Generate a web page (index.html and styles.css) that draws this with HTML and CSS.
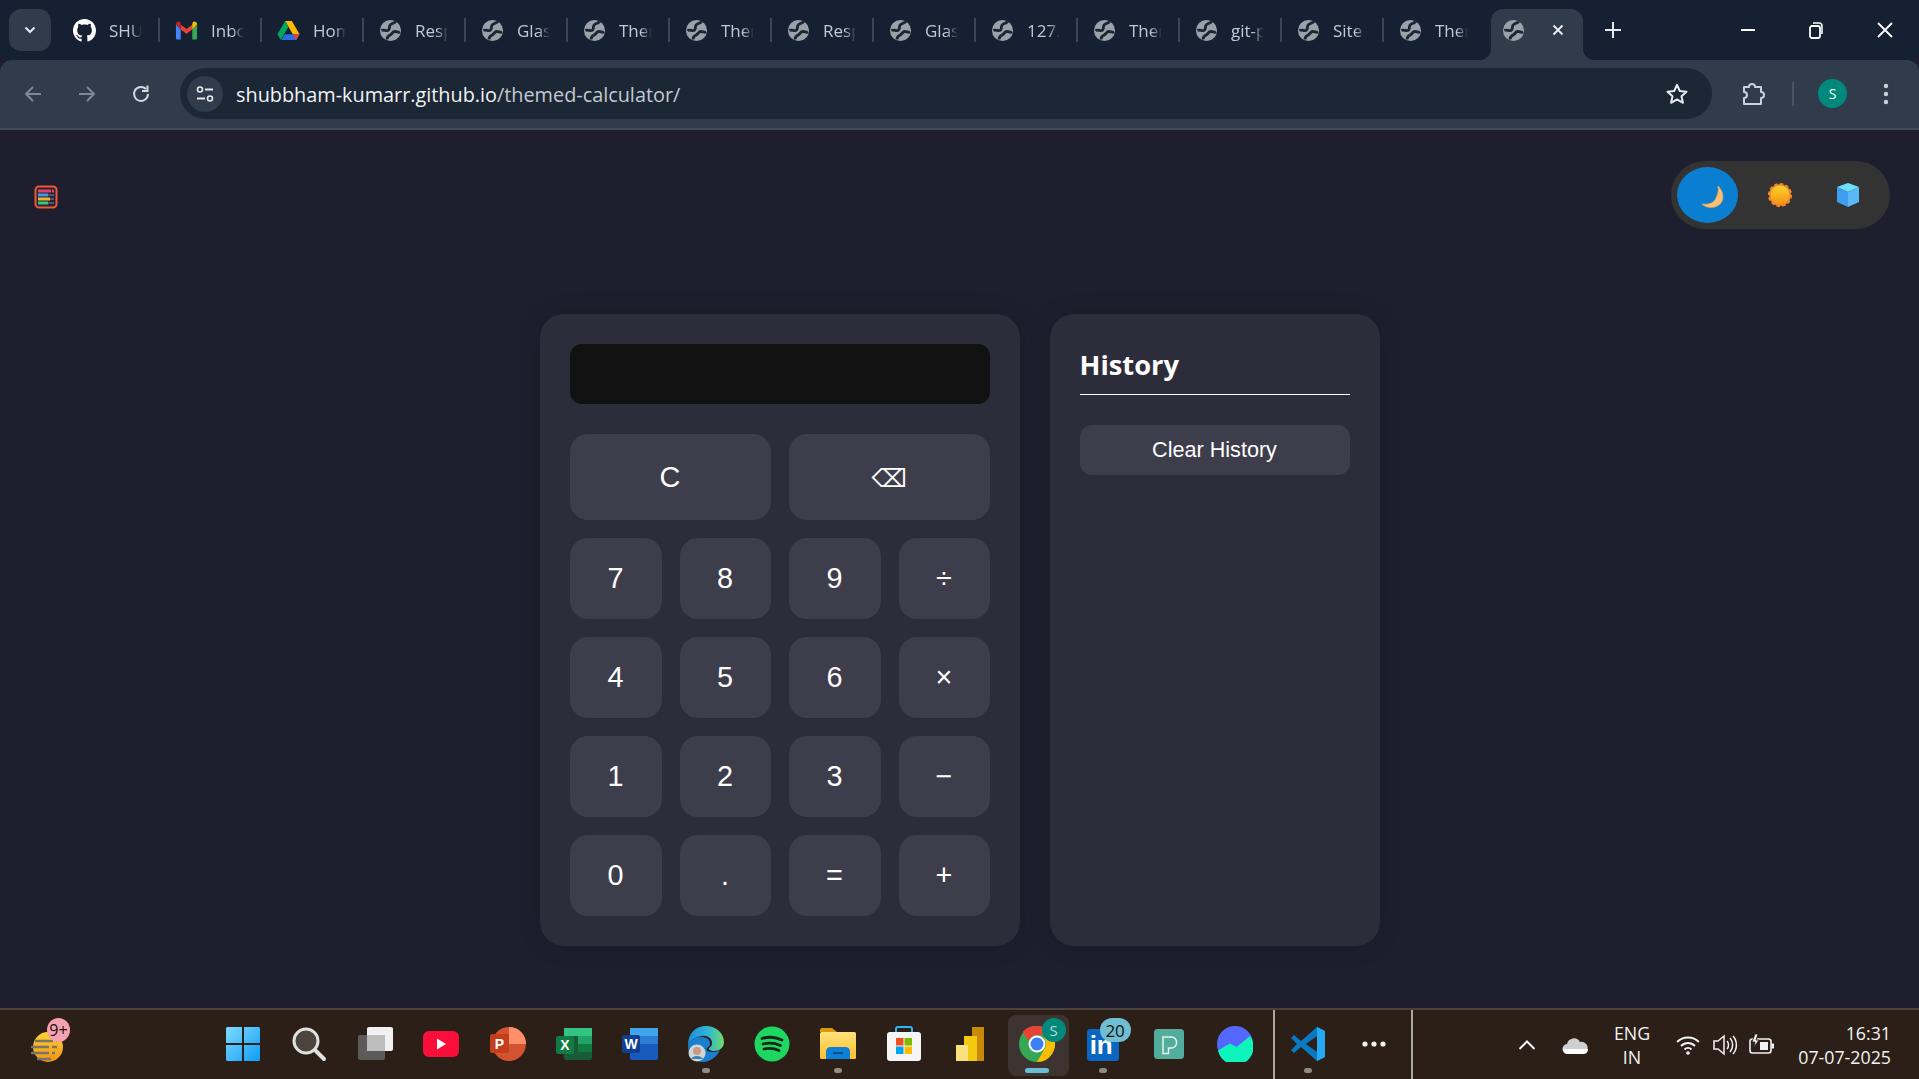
FILE: index.html
```html
<!DOCTYPE html>
<html lang="en">
<head>
    <meta charset="UTF-8">
    <meta name="viewport" content="width=device-width, initial-scale=1.0">
    <title>Themed Calculator</title>
    <link rel="stylesheet" href="styles.css">
</head>
<body>
    <svg class="defs" width="0" height="0">
        <defs>
            <symbol id="globe" viewBox="0 0 24 24">
                <circle cx="12" cy="12" r="11" fill="#9ba1a8"/>
                <path d="M2.500 12c3-1.500 5.500 1.500 7.500-.5s-.5-4.500 2.500-6 4-1.500 5-3" fill="none" stroke="#1b2635" stroke-width="3"/>
                <path d="M8.500 21.500c-.5-3 1.500-4 3.500-5s2-3.500 4.500-3.500 3.500 1.500 5.500.5" fill="none" stroke="#1b2635" stroke-width="3"/>
            </symbol>
            <linearGradient id="winGrad" x1="0" y1="0" x2="1" y2="1">
                <stop offset="0" stop-color="#7fdcff"/>
                <stop offset="1" stop-color="#0f9bf5"/>
            </linearGradient>
            <linearGradient id="sunGrad" x1="0" y1="0" x2="0" y2="1">
                <stop offset="0" stop-color="#ffd42e"/>
                <stop offset="1" stop-color="#f39214"/>
            </linearGradient>
            <linearGradient id="edgeGrad" x1="0" y1="0" x2="1" y2="0">
                <stop offset="0" stop-color="#1b8fd8"/>
                <stop offset="0.55" stop-color="#2fb4d8"/>
                <stop offset="1" stop-color="#6fdc6a"/>
            </linearGradient>
            <linearGradient id="folderGrad" x1="0" y1="0" x2="0" y2="1">
                <stop offset="0" stop-color="#ffe27a"/>
                <stop offset="1" stop-color="#fbbf2c"/>
            </linearGradient>
        </defs>
    </svg>

    <!-- browser chrome -->
    <div class="tabstrip">
        <div class="tab-search">
            <svg width="14" height="14" viewBox="0 0 14 14"><path d="M2.500 4.500 7 9l4.500-4.500" fill="none" stroke="#e6e9ee" stroke-width="2"/></svg>
        </div>
        <div class="tab">
            <svg class="favicon" viewBox="0 0 16 16"><path fill="#fff" d="M8 0C3.580 0 0 3.580 0 8c0 3.540 2.290 6.530 5.470 7.590.4.070.55-.17.55-.38 0-.19-.01-.82-.01-1.490-2.010.37-2.530-.49-2.690-.94-.09-.23-.48-.94-.82-1.130-.28-.15-.68-.52-.01-.53.63-.01 1.080.58 1.230.82.72 1.210 1.870.87 2.330.66.070-.52.28-.87.51-1.070-1.780-.2-3.640-.89-3.640-3.950 0-.87.31-1.590.82-2.150-.08-.2-.36-1.020.08-2.120 0 0 .67-.21 2.200.82.64-.18 1.320-.27 2-.27.68 0 1.360.09 2 .27 1.530-1.040 2.200-.82 2.200-.82.44 1.100.16 1.920.08 2.120.51.56.82 1.270.82 2.150 0 3.070-1.870 3.750-3.650 3.950.29.25.54.73.54 1.480 0 1.070-.01 1.930-.01 2.200 0 .21.15.46.55.38A8.013 8.013 0 0016 8c0-4.420-3.580-8-8-8z"/></svg>
            <span class="tab-title">SHU</span>
        </div>
        <div class="tab">
            <svg class="favicon" viewBox="0 0 24 24"><path d="M1 5.500V20c0 .8.6 1.500 1.500 1.500H6V11z" fill="#4285f4"/><path d="M23 5.500V20c0 .8-.6 1.500-1.500 1.500H18V11z" fill="#34a853"/><path d="M6 11v-5l6 4.500L18 6v5l-6 4.500z" fill="#ea4335"/><path d="M1 5.500C1 3 3.800 2 5.500 3.300L6 6v5z" fill="#c5221f"/><path d="M23 5.500C23 3 20.200 2 18.500 3.300L18 6v5z" fill="#fbbc04"/></svg>
            <span class="tab-title">Inbo</span>
        </div>
        <div class="tab">
            <svg class="favicon" viewBox="0 0 24 24"><path d="M8.500 2h7l8 14h-7z" fill="#ffba00"/><path d="M8.500 2 .5 16l3.500 6 8-14z" fill="#00a85d"/><path d="M8.200 16h15.300L20 22H4.500z" fill="#2a6fdb"/><path d="M16.500 16h7L20 22z" fill="#ea4335"/></svg>
            <span class="tab-title">Hom</span>
        </div>
        <div class="tab"><svg class="favicon"><use href="#globe"/></svg><span class="tab-title">Resp</span></div>
        <div class="tab"><svg class="favicon"><use href="#globe"/></svg><span class="tab-title">Glas</span></div>
        <div class="tab"><svg class="favicon"><use href="#globe"/></svg><span class="tab-title">Ther</span></div>
        <div class="tab"><svg class="favicon"><use href="#globe"/></svg><span class="tab-title">Ther</span></div>
        <div class="tab"><svg class="favicon"><use href="#globe"/></svg><span class="tab-title">Resp</span></div>
        <div class="tab"><svg class="favicon"><use href="#globe"/></svg><span class="tab-title">Glas</span></div>
        <div class="tab"><svg class="favicon"><use href="#globe"/></svg><span class="tab-title">127.</span></div>
        <div class="tab"><svg class="favicon"><use href="#globe"/></svg><span class="tab-title">Ther</span></div>
        <div class="tab"><svg class="favicon"><use href="#globe"/></svg><span class="tab-title">git-p</span></div>
        <div class="tab"><svg class="favicon"><use href="#globe"/></svg><span class="tab-title">Site</span></div>
        <div class="tab no-sep"><svg class="favicon"><use href="#globe"/></svg><span class="tab-title">Ther</span></div>
        <div class="tab-active">
            <svg class="favicon"><use href="#globe"/></svg>
            <svg width="14" height="14" viewBox="0 0 14 14"><path d="M2.500 2.500l9 9m0-9-9 9" stroke="#eef1f5" stroke-width="1.800"/></svg>
        </div>
        <svg class="new-tab" width="18" height="18" viewBox="0 0 18 18"><path d="M9 1v16M1 9h16" stroke="#e6e9ee" stroke-width="2"/></svg>
        <div class="win-controls">
            <div class="win-btn"><svg width="16" height="16" viewBox="0 0 16 16"><path d="M1 8h14" stroke="#fff" stroke-width="2"/></svg></div>
            <div class="win-btn"><svg width="16" height="18" viewBox="0 0 16 18"><rect x="2" y="5" width="10" height="12" rx="2" fill="none" stroke="#fff" stroke-width="1.800"/><path d="M5 2h6a3 3 0 0 1 3 3v8" fill="none" stroke="#fff" stroke-width="1.500"/></svg></div>
            <div class="win-btn"><svg width="18" height="18" viewBox="0 0 18 18"><path d="M2 2l14 14M16 2 2 16" stroke="#fff" stroke-width="1.800"/></svg></div>
        </div>
    </div>

    <div class="toolbar">
        <div class="nav-btn"><svg width="20" height="20" viewBox="0 0 20 20"><path d="M18 10H3m7-7-7 7 7 7" fill="none" stroke="#7f8995" stroke-width="2"/></svg></div>
        <div class="nav-btn"><svg width="20" height="20" viewBox="0 0 20 20"><path d="M2 10h15m-7-7 7 7-7 7" fill="none" stroke="#7f8995" stroke-width="2"/></svg></div>
        <div class="nav-btn"><svg width="22" height="22" viewBox="0 0 22 22"><path d="M18 11a7 7 0 1 1-2-5" fill="none" stroke="#d5dae1" stroke-width="2"/><path d="M17.500 2.500V8H12" fill="none" stroke="#d5dae1" stroke-width="2"/></svg></div>
        <div class="omnibox">
            <div class="site-info">
                <svg width="20" height="20" viewBox="0 0 20 20"><circle cx="5" cy="5.500" r="2.500" fill="none" stroke="#e6e9ee" stroke-width="1.600"/><path d="M10 5.500h8M2 14.500h8" stroke="#e6e9ee" stroke-width="1.800"/><circle cx="15" cy="14.500" r="2.500" fill="none" stroke="#e6e9ee" stroke-width="1.600"/></svg>
            </div>
            <div class="url">shubbham-kumarr.github.io<span class="url-path">/themed-calculator/</span></div>
            <svg class="star" width="24" height="24" viewBox="0 0 24 24"><path d="m12 2.800 2.800 6.200 6.700.7-5 4.500 1.400 6.600-5.900-3.400-5.900 3.400 1.400-6.600-5-4.500 6.700-.7z" fill="none" stroke="#e6e9ee" stroke-width="2" stroke-linejoin="round"/></svg>
        </div>
        <svg class="puzzle" width="26" height="26" viewBox="0 0 26 26"><path d="M4 6h5a3 3 0 0 1 6 0h6v5a3 3 0 0 1 0 6v6H4v-6a3 3 0 0 0 0-6z" fill="none" stroke="#c9d0d9" stroke-width="2" stroke-linejoin="round"/></svg>
        <div class="toolbar-sep"></div>
        <div class="avatar">S</div>
        <svg class="menu-dots" width="6" height="22" viewBox="0 0 6 22"><circle cx="3" cy="3" r="2.200" fill="#c9d0d9"/><circle cx="3" cy="11" r="2.200" fill="#c9d0d9"/><circle cx="3" cy="19" r="2.200" fill="#c9d0d9"/></svg>
    </div>

    <!-- page -->
    <main class="page">
        <svg class="abacus" width="24" height="24" viewBox="0 0 24 24">
            <rect x="1.500" y="1.500" width="21" height="21" rx="3.500" fill="#25243a" stroke="#f0582f" stroke-width="2"/>
            <path d="M4 6h13" stroke="#e8416a" stroke-width="3"/><path d="M18 6h2" stroke="#e8416a" stroke-width="3"/>
            <path d="M4 10h10" stroke="#3f9be8" stroke-width="3"/><path d="M14 10h6" stroke="#66666f" stroke-width="1.500"/>
            <path d="M4 14h12" stroke="#f5b42a" stroke-width="3"/><path d="M16 14h4" stroke="#66666f" stroke-width="1.500"/>
            <path d="M4 18h10" stroke="#35c77a" stroke-width="3"/><path d="M14 18h6" stroke="#66666f" stroke-width="1.500"/>
        </svg>

        <div class="theme-toggle">
            <div class="theme-opt active">
                <svg class="moon" width="24" height="24" viewBox="0 0 24 24"><path d="M17 1c5 5 7 13 2 18-5 5-14 4-18 0 7 1 12-1 14-6 2-4 3-8 2-12z" fill="#f9c077" stroke="#f3a950" stroke-width=".8"/></svg>
            </div>
            <div class="theme-opt">
                <svg width="26" height="26" viewBox="0 0 26 26"><circle cx="13" cy="13" r="10.800" fill="#f4862a" stroke="#f4862a" stroke-width="2.500" stroke-dasharray="3.500 2.100"/><circle cx="13" cy="13" r="9.500" fill="url(#sunGrad)"/></svg>
            </div>
            <div class="theme-opt">
                <svg width="26" height="26" viewBox="0 0 26 26"><path d="M13 1l11 4-11 5L2 5z" fill="#6fe0fa"/><path d="M2 5l11 5v15L2 20z" fill="#3f9df0"/><path d="M24 5 13 10v15l11-5z" fill="#59b8f5"/></svg>
            </div>
        </div>

        <div class="calc-wrap">
            <section class="calculator">
                <div class="display"></div>
                <div class="keys">
                    <button class="key wide">C</button>
                    <button class="key wide back">⌫</button>
                    <button class="key">7</button>
                    <button class="key">8</button>
                    <button class="key">9</button>
                    <button class="key op">÷</button>
                    <button class="key">4</button>
                    <button class="key">5</button>
                    <button class="key">6</button>
                    <button class="key op">×</button>
                    <button class="key">1</button>
                    <button class="key">2</button>
                    <button class="key">3</button>
                    <button class="key op">−</button>
                    <button class="key">0</button>
                    <button class="key">.</button>
                    <button class="key">=</button>
                    <button class="key op">+</button>
                </div>
            </section>
            <section class="history">
                <h2>History</h2>
                <button class="clear-btn">Clear History</button>
            </section>
        </div>
    </main>

    <!-- windows taskbar -->
    <footer class="taskbar">
        <div class="weather">
            <svg width="36" height="34" viewBox="0 0 36 34"><ellipse cx="19" cy="18" rx="15" ry="15" fill="url(#sunGrad)"/><path d="M6 12h22M2 18h26M2 24h24M8 30h14" stroke="#77736d" stroke-width="2.500" stroke-dasharray="18 3"/></svg>
            <span class="weather-badge">9+</span>
        </div>
        <div class="apps">
            <div class="app">
                <svg width="36" height="36" viewBox="0 0 36 36"><path d="M1 2.500q0-1.500 1.500-1.500H17v16H1zM19 1h14.500q1.500 0 1.500 1.500V17H19zM1 19h16v16H2.500Q1 35 1 33.500zM19 19h16v14.500q0 1.500-1.500 1.500H19z" fill="url(#winGrad)"/></svg>
            </div>
            <div class="app">
                <svg width="36" height="36" viewBox="0 0 36 36"><circle cx="15" cy="15" r="12" fill="#4d443d" stroke="#dfe0e0" stroke-width="3"/><path d="M24 24l9 9" stroke="#dfe0e0" stroke-width="4" stroke-linecap="round"/></svg>
            </div>
            <div class="app">
                <svg width="36" height="36" viewBox="0 0 36 36"><rect x="1" y="9" width="27" height="25" rx="2" fill="#5d5b59"/><rect x="10" y="1" width="26" height="24" rx="2" fill="#f1f1f1"/><rect x="10" y="9" width="18" height="16" fill="#bdbdbd"/></svg>
            </div>
            <div class="app">
                <svg width="36" height="26" viewBox="0 0 36 26"><rect width="36" height="26" rx="6" fill="#fb0f3a"/><path d="M14 7.500v11l9-5.500z" fill="#fff"/></svg>
            </div>
            <div class="app">
                <svg width="36" height="34" viewBox="0 0 36 34"><circle cx="19" cy="17" r="17" fill="#d35230"/><path d="M19 0a17 17 0 0 1 17 17H19z" fill="#ff8f6b"/><rect x="0" y="7" width="19" height="19" rx="2" fill="#c43e1c"/><text x="9.500" y="22" class="icon-letter">P</text></svg>
            </div>
            <div class="app">
                <svg width="36" height="34" viewBox="0 0 36 34"><rect x="8" y="1" width="28" height="32" rx="2" fill="#185c37"/><rect x="8" y="1" width="28" height="8" fill="#33c481"/><rect x="22" y="9" width="14" height="8" fill="#21a366"/><rect x="22" y="17" width="14" height="8" fill="#107c41"/><rect x="0" y="9" width="18" height="18" rx="2" fill="#107c41"/><text x="9" y="23" class="icon-letter">X</text></svg>
            </div>
            <div class="app">
                <svg width="36" height="34" viewBox="0 0 36 34"><rect x="8" y="1" width="28" height="32" rx="2" fill="#185abd"/><rect x="8" y="1" width="28" height="8" fill="#41a5ee"/><rect x="8" y="9" width="28" height="8" fill="#2b7cd3"/><rect x="0" y="8" width="18" height="18" rx="2" fill="#103f91"/><text x="9" y="22" class="icon-letter">W</text></svg>
            </div>
            <div class="app running">
                <svg width="38" height="38" viewBox="0 0 38 38"><path d="M1 20C1 8 9 1 19 1c10 0 18 7 18 16 0 6-5 9-10 9-4 0-6-2-5-3 2-1 3-3 3-5 0-5-5-8-10-7C8 12 3 15 1 20z" fill="url(#edgeGrad)"/><path d="M1 20c2-5 7-8 12-8 5-.5 10 2 10 6 0 2-1 4-3 5-2 3 2 4 6 4 3 0 5-.5 7-2-3 6-9 12-17 12C7 37 1 30 1 20z" fill="#1b7fd0"/><circle cx="10" cy="28" r="8.500" fill="#cfd6da"/><circle cx="10" cy="26" r="4" fill="#c59a80"/><path d="M4 34c2-4 10-4 12 0z" fill="#3b7fb5"/></svg>
            </div>
            <div class="app">
                <svg width="36" height="36" viewBox="0 0 36 36"><circle cx="18" cy="18" r="17.500" fill="#1ed760"/><path d="M8 12.500c7-2 14-1.500 20 1.500M9 18c6-1.500 12-1 17.500 1.500M10 23c5-1 10-.8 15 1.500" fill="none" stroke="#14261a" stroke-width="2.800" stroke-linecap="round"/></svg>
            </div>
            <div class="app running">
                <svg width="36" height="34" viewBox="0 0 36 34"><path d="M0 3q0-2 2-2h10l5 4h-17z" fill="#d99a10"/><rect y="5" width="36" height="27" rx="1.500" fill="url(#folderGrad)"/><path d="M6 32v-7q0-5 5-5h14q5 0 5 5v7z" fill="#0f7fd8"/><path d="M13 26h10" stroke="#084f92" stroke-width="2"/></svg>
            </div>
            <div class="app">
                <svg width="36" height="36" viewBox="0 0 36 36"><path d="M10 7V3q0-2 2-2h12q2 0 2 2v4" fill="none" stroke="#29b6f6" stroke-width="2"/><rect x="1" y="6" width="34" height="29" rx="3" fill="#f5f5f5"/><rect x="10" y="12" width="7.500" height="7.500" fill="#f25022"/><rect x="18.500" y="12" width="7.500" height="7.500" fill="#7fba00"/><rect x="10" y="20.500" width="7.500" height="7.500" fill="#00a4ef"/><rect x="18.500" y="20.500" width="7.500" height="7.500" fill="#ffb900"/></svg>
            </div>
            <div class="app">
                <svg width="28" height="36" viewBox="0 0 28 36"><rect x="16" y="1" width="12" height="34" fill="#c98a0a"/><rect x="8" y="10" width="13" height="25" fill="#f2c811"/><rect x="0" y="19" width="12" height="16" fill="#f9e27d"/></svg>
            </div>
            <div class="app active-app">
                <svg width="36" height="36" viewBox="0 0 36 36"><circle cx="18" cy="18" r="18" fill="#34a853"/><path d="M18 0a18 18 0 0 1 15.600 9H18a9 9 0 0 0-8.500 6L3.500 6A18 18 0 0 1 18 0z" fill="#ea4335"/><path d="M33.600 9A18 18 0 0 1 18 36l7.800-13.500A9 9 0 0 0 25 12z" fill="#fbbc04"/><circle cx="18" cy="18" r="8.500" fill="#fff"/><circle cx="18" cy="18" r="6.500" fill="#3c7ff0"/></svg>
                <span class="profile-badge">S</span>
            </div>
            <div class="app running">
                <div class="linkedin">in</div>
                <span class="count-badge">20</span>
            </div>
            <div class="app">
                <svg width="30" height="30" viewBox="0 0 30 30"><rect width="30" height="30" rx="3.500" fill="#53ad9c"/><path d="M9 8h8.500a5 5 0 0 1 5 5v1a5 5 0 0 1-5 5h-3v5.500H9z" fill="none" stroke="#e6f4f0" stroke-width="1.500"/></svg>
            </div>
            <div class="app">
                <svg width="36" height="36" viewBox="0 0 36 36"><circle cx="18" cy="18" r="18" fill="#5468ff"/><path d="M1 24.500 13 17.500l6.500 3.500L33 10A18 18 0 1 1 1 24.500z" fill="#0df5bd"/></svg>
            </div>
        </div>
        <div class="pinned-zone">
            <div class="app running">
                <svg width="36" height="36" viewBox="0 0 36 36"><path d="M27 1 35 5V31L27 35 11 21 4 27 1 24 7 18 1 12 4 9 11 15z" fill="#0a78c2"/><path d="M27 10 16 18 27 26z" fill="#2b1f17"/><path d="M27 1 35 5V31L27 35z" fill="#24a9f2"/></svg>
            </div>
            <div class="app">
                <svg width="24" height="6" viewBox="0 0 24 6"><circle cx="3" cy="3" r="2.600" fill="#f2f2f2"/><circle cx="12" cy="3" r="2.600" fill="#f2f2f2"/><circle cx="21" cy="3" r="2.600" fill="#f2f2f2"/></svg>
            </div>
        </div>
        <div class="tray">
            <svg class="tray-chevron" width="18" height="12" viewBox="0 0 18 12"><path d="M1.500 10 9 2.500l7.500 7.500" fill="none" stroke="#f2f2f2" stroke-width="2"/></svg>
            <svg class="tray-cloud" width="26" height="18" viewBox="0 0 26 18"><path d="M6 18a5 5 0 0 1-1-10 7 7 0 0 1 13-2 6 6 0 0 1 3 12z" fill="#cfcfcf"/><path d="M1 13h25q0 5-5 5H6q-4 0-5-5z" fill="#fff"/></svg>
            <div class="lang">ENG<br>IN</div>
            <svg class="tray-wifi" width="26" height="22" viewBox="0 0 26 22"><path d="M2 8c6-6 16-6 22 0M6 12c4-4 10-4 14 0M9.500 15.500c2-2 5-2 7 0" fill="none" stroke="#f2f2f2" stroke-width="1.800"/><circle cx="13" cy="19" r="1.800" fill="#f2f2f2"/></svg>
            <svg class="tray-sound" width="26" height="24" viewBox="0 0 26 24"><path d="M2 8h4l6-5v18l-6-5H2z" fill="none" stroke="#f2f2f2" stroke-width="1.500"/><path d="M15 8c2 2 2 6 0 8M18 5c3.500 4 3.500 10 0 14M21 3c4.500 5 4.500 13 0 18" fill="none" stroke="#f2f2f2" stroke-width="1.500"/></svg>
            <svg class="tray-battery" width="26" height="24" viewBox="0 0 26 24"><rect x="1" y="6" width="21" height="14" rx="2.500" fill="none" stroke="#f2f2f2" stroke-width="1.600"/><rect x="22.500" y="10.500" width="2.500" height="5" fill="#f2f2f2"/><path d="M11 9h8v8h-8z" fill="#f2f2f2"/><path d="M6 1 3 9h3l-1 5 5-7H7l2-6z" fill="#f2f2f2" stroke="#2b1f17" stroke-width=".8"/></svg>
            <div class="clock"><div>16:31</div><div>07-07-2025</div></div>
        </div>
    </footer>
</body>
</html>
```

FILE: styles.css
```css
* {
    box-sizing: border-box;
}
html, body {
    height: 100%;
}
body {
    margin: 0;
    display: flex;
    flex-direction: column;
    overflow: hidden;
    font-family: "Liberation Sans", Arial, sans-serif;
    background: #1e1e2e;
    color: #fff;
}
.defs {
    position: absolute;
}

/* tab strip */
.tabstrip {
    height: 60px;
    flex: none;
    display: flex;
    align-items: flex-start;
    padding: 9px 0 0 9px;
    background: #152032;
    font-family: "Open Sans", sans-serif;
}
.tab-search {
    width: 42px;
    height: 42px;
    margin-right: 7px;
    display: flex;
    align-items: center;
    justify-content: center;
    border-radius: 12px;
    background: #303b4c;
}
.tab {
    width: 102px;
    height: 42px;
    position: relative;
    display: flex;
    align-items: center;
    padding-left: 15px;
}
.tab::after {
    content: "";
    position: absolute;
    right: 0;
    top: 9px;
    width: 2px;
    height: 24px;
    background: #3b4656;
}
.tab.no-sep::after {
    display: none;
}
.favicon {
    width: 23px;
    height: 23px;
    flex: none;
}
.tab-title {
    margin-left: 13px;
    width: 33px;
    overflow: hidden;
    white-space: nowrap;
    font-size: 17px;
    color: #c3c9d1;
    -webkit-mask-image: linear-gradient(to right, #000 65%, transparent);
    mask-image: linear-gradient(to right, #000 65%, transparent);
}
.tab-active {
    width: 92px;
    height: 51px;
    margin-left: 5px;
    padding: 0 18px 9px 11px;
    position: relative;
    display: flex;
    align-items: center;
    justify-content: space-between;
    border-radius: 12px 12px 0 0;
    background: #303b4c;
}
.tab-active::before,
.tab-active::after {
    content: "";
    position: absolute;
    bottom: 0;
    width: 12px;
    height: 12px;
}
.tab-active::before {
    left: -12px;
    background: radial-gradient(circle at 0 0, transparent 12px, #303b4c 12.500px);
}
.tab-active::after {
    right: -12px;
    background: radial-gradient(circle at 100% 0, transparent 12px, #303b4c 12.500px);
}
.new-tab {
    margin: 12px 0 0 21px;
}
.win-controls {
    margin-left: auto;
    margin-top: -9px;
    display: flex;
}
.win-btn {
    width: 68px;
    height: 60px;
    padding-right: 2px;
    display: flex;
    align-items: center;
    justify-content: center;
}
.win-btn:last-child {
    padding-right: 0;
}

/* toolbar */
.toolbar {
    height: 70px;
    flex: none;
    display: flex;
    align-items: center;
    gap: 10px;
    padding: 0 0 1px 11px;
    background: #303b4c;
    border-bottom: 2px solid #414b59;
    border-radius: 12px 12px 0 0;
}
.nav-btn {
    width: 44px;
    height: 44px;
    display: flex;
    align-items: center;
    justify-content: center;
}
.omnibox {
    width: 1532px;
    height: 51px;
    margin-left: 7px;
    padding: 0 23px 0 7px;
    display: flex;
    align-items: center;
    border-radius: 26px;
    background: #1b2735;
}
.site-info {
    width: 36px;
    height: 36px;
    margin-right: 13px;
    display: flex;
    align-items: center;
    justify-content: center;
    border-radius: 50%;
    background: #303b4c;
}
.url {
    padding-top: 1px;
    font-family: "Open Sans", sans-serif;
    font-size: 19.850px;
    color: #f1f3f6;
}
.url-path {
    color: #c3c9d1;
}
.star {
    margin-left: auto;
}
.puzzle {
    margin-left: 18px;
}
.toolbar-sep {
    width: 2px;
    height: 24px;
    margin-left: 16px;
    background: #4a5464;
}
.avatar {
    width: 29px;
    height: 29px;
    margin-left: 14px;
    display: flex;
    align-items: center;
    justify-content: center;
    border-radius: 50%;
    background: #00897b;
    font-family: "Open Sans", sans-serif;
    font-size: 14px;
}
.menu-dots {
    margin-left: 26px;
}

/* page */
.page {
    flex: 1;
    position: relative;
    padding-top: 184px;
    background: #1e1e2e;
}
.abacus {
    position: absolute;
    left: 34px;
    top: 55px;
}
.theme-toggle {
    position: absolute;
    left: 1671px;
    top: 31px;
    width: 219px;
    height: 68px;
    padding: 6px;
    display: flex;
    align-items: center;
    border-radius: 34px;
    background: #333;
}
.theme-opt {
    height: 56px;
    width: 71px;
    flex: none;
    display: flex;
    align-items: center;
    justify-content: center;
}
.theme-opt:last-child {
    width: 65px;
}
.theme-opt.active {
    width: 61px;
    margin-right: 6px;
    border-radius: 50%;
    background: #0a7fd1;
}
.moon {
    margin: 3px 0 0 10px;
}
.calc-wrap {
    display: flex;
    justify-content: center;
    gap: 30px;
}
.calculator,
.history {
    padding: 30px;
    border-radius: 24px;
    background: #2d2c3b;
    box-shadow: 0 0 24px rgba(0, 0, 0, 0.12);
}
.calculator {
    width: 480px;
}
.display {
    height: 60px;
    margin-bottom: 30px;
    border-radius: 12px;
    background: #121212;
}
.keys {
    display: grid;
    grid-template-columns: 92px 91px 92px 91px;
    grid-template-rows: 86px repeat(4, 81px);
    gap: 18px;
}
.key {
    border: none;
    border-radius: 18px;
    background: #3e3d4c;
    color: #fff;
    font-family: "Liberation Sans", Arial, sans-serif;
    font-size: 28.800px;
    padding: 0;
}
.key.wide {
    grid-column: span 2;
}
.key.back {
    padding-top: 3px;
    font-family: "DejaVu Sans", sans-serif;
    font-size: 25px;
}
.history {
    width: 330px;
}
.history h2 {
    height: 51px;
    margin: 0 0 30px;
    border-bottom: 1px solid #fff;
    font-family: "Open Sans", sans-serif;
    font-size: 27.300px;
    line-height: 42px;
    font-weight: 700;
}
.clear-btn {
    width: 100%;
    height: 50px;
    border: none;
    border-radius: 12px;
    background: #3e3d4c;
    color: #fff;
    font-family: "Liberation Sans", Arial, sans-serif;
    font-size: 21.600px;
}

/* taskbar */
.taskbar {
    height: 71px;
    flex: none;
    display: flex;
    align-items: stretch;
    background: #2b1f17;
    border-top: 2px solid #4a433d;
    font-family: "Open Sans", sans-serif;
}
.weather {
    width: 210px;
    flex: none;
    position: relative;
    padding: 19px 0 0 29px;
}
.weather-badge {
    position: absolute;
    left: 47px;
    top: 8px;
    width: 23px;
    height: 24px;
    display: flex;
    align-items: center;
    justify-content: center;
    border-radius: 50%;
    background: #f7a1b0;
    color: #111;
    font-size: 16px;
}
.apps {
    display: flex;
    flex: none;
}
.app {
    width: 66.130px;
    padding-bottom: 2px;
    position: relative;
    display: flex;
    align-items: center;
    justify-content: center;
}
.app.running::after,
.app.active-app::after {
    content: "";
    position: absolute;
    bottom: 6px;
    left: 29px;
    width: 8px;
    height: 5px;
    border-radius: 3px;
    background: #8e8a86;
}
.app.active-app {
    border-radius: 8px;
}
.app.active-app::before {
    content: "";
    position: absolute;
    left: 4px;
    right: 1px;
    top: 5px;
    bottom: 3px;
    border-radius: 8px;
    background: #3d3431;
}
.app.active-app svg {
    position: relative;
}
.app.active-app::after {
    left: 21px;
    width: 24px;
    background: #6cbcd4;
}
.icon-letter {
    font-family: "Liberation Sans", Arial, sans-serif;
    font-size: 14px;
    font-weight: 700;
    fill: #fff;
    text-anchor: middle;
}
.profile-badge {
    position: absolute;
    left: 38px;
    top: 8px;
    width: 24px;
    height: 24px;
    display: flex;
    align-items: center;
    justify-content: center;
    border-radius: 50%;
    background: #00897b;
    font-size: 15px;
    color: #b9dcd8;
}
.linkedin {
    width: 32px;
    height: 32px;
    margin-top: 2px;
    padding-right: 3px;
    display: flex;
    align-items: center;
    justify-content: center;
    border-radius: 3px;
    background: #0a66c2;
    font-family: "Liberation Sans", Arial, sans-serif;
    font-size: 26px;
    font-weight: 700;
    line-height: 32px;
}
.count-badge {
    position: absolute;
    left: 30px;
    top: 8px;
    width: 31px;
    height: 24px;
    display: flex;
    align-items: center;
    justify-content: center;
    border-radius: 12px;
    background: #6fbed2;
    color: #111;
    font-size: 17px;
}
.pinned-zone {
    margin-left: 5px;
    display: flex;
    border-left: 2px solid #aaa6a2;
    border-right: 2px solid #aaa6a2;
    width: 140px;
    flex: none;
}
.tray {
    flex: 1;
    display: flex;
    align-items: center;
    position: relative;
    font-size: 17.800px;
    line-height: 24px;
    color: #f2f2f2;
    padding-left: 105px;
}
.tray-cloud {
    margin-left: 26px;
}
.lang {
    width: 60px;
    margin-left: 14px;
    text-align: center;
}
.tray-wifi {
    margin-left: 13px;
}
.tray-sound {
    margin-left: 11px;
}
.tray-battery {
    margin-left: 11px;
}
.clock {
    margin-left: auto;
    margin-right: 28px;
    text-align: right;
}
```
